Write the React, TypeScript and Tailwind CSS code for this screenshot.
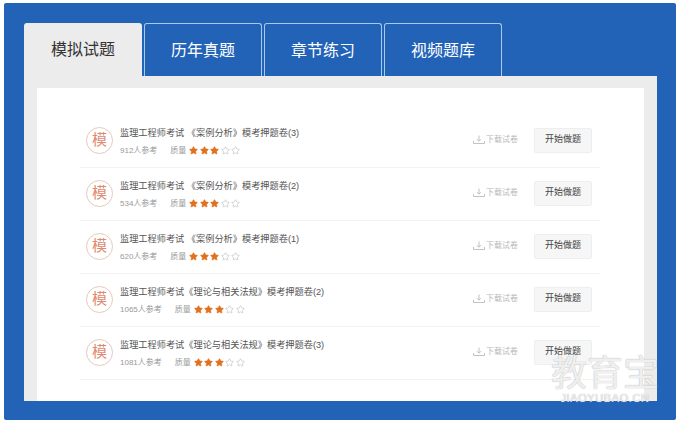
import { Star } from "lucide-react";

const tabs = ["模拟试题", "历年真题", "章节练习", "视频题库"];

const papers = [
  { title: "监理工程师考试 《案例分析》模考押题卷(3)", people: "912人参考" },
  { title: "监理工程师考试 《案例分析》模考押题卷(2)", people: "534人参考" },
  { title: "监理工程师考试 《案例分析》模考押题卷(1)", people: "620人参考" },
  { title: "监理工程师考试《理论与相关法规》模考押题卷(2)", people: "1065人参考" },
  { title: "监理工程师考试《理论与相关法规》模考押题卷(3)", people: "1081人参考" },
];

function Stars() {
  return (
    <div className="ml-[3px] flex gap-[1.5px]">
      {[0, 1, 2, 3, 4].map((i) =>
        i < 3 ? (
          <Star key={i} size={9} className="fill-[#e2711d] text-[#e2711d]" />
        ) : (
          <Star key={i} size={9} strokeWidth={1.5} className="text-[#b5b5b5]" />
        )
      )}
    </div>
  );
}

function DownloadIcon() {
  return (
    <svg width="12" height="10" viewBox="0 0 12 10" fill="none" stroke="#bbb" strokeWidth="0.9">
      <path d="M6 0.5V6M4 4.2L6 6.2L8 4.2" />
      <path d="M0.5 6V8.5H11.5V6" />
    </svg>
  );
}

function PaperRow({ title, people }: { title: string; people: string }) {
  return (
    <div className="flex h-[53px] items-center border-b border-[#f3f3f3] pl-[6px] pr-[8px]">
      <div className="mb-[2px] flex h-[27px] w-[27px] shrink-0 items-center justify-center rounded-full border-[1.5px] border-[#e6c8ba] text-[15px] text-[#e08a70]">
        模
      </div>
      <div className="ml-[7px] flex-1">
        <div className="text-[9.2px] leading-[13px] text-[#555]">{title}</div>
        <div className="mt-[5px] flex items-center text-[8px] leading-[11px] text-[#999]">
          <span>{people}</span>
          <span className="ml-[13px]">质量</span>
          <Stars />
        </div>
      </div>
      <div className="mb-[2px] flex items-center gap-[1px] text-[8px] text-[#b8b8b8]">
        <DownloadIcon />
        <span>下载试卷</span>
      </div>
      <button className="mb-[2px] ml-[16px] h-[25px] w-[58px] rounded-[2px] border border-[#eee] bg-[#f6f6f6] text-[9px] text-[#444]">
        开始做题
      </button>
    </div>
  );
}

export default function App() {
  return (
    <div className="relative h-[426px] w-[680px] overflow-hidden bg-white pl-[4px] pr-[4px] pt-[3px] font-['Liberation_Sans','Noto_Sans_CJK_SC',sans-serif]">
      <div className="flex h-[417px] flex-col rounded-[2px] bg-[#2263b8] pb-[19px] pl-[20px] pr-[19px] pt-[20px]">
        <div className="flex h-[53px] shrink-0 gap-[2px]">
          {tabs.map((tab, i) => (
            <div
              key={tab}
              className={
                i === 0
                  ? "flex w-[118px] items-center justify-center rounded-t-[3px] bg-[#ececec] pt-[1px] text-[16px] text-[#333]"
                  : "flex w-[118px] items-center justify-center rounded-t-[3px] border border-b-0 border-[#a9c8ea] pt-[1px] text-[16px] text-white"
              }
            >
              {tab}
            </div>
          ))}
        </div>
        <div className="flex-1 bg-[#ececec] px-[13px] pt-[12px]">
          <div className="h-full bg-white pl-[43px] pr-[44px] pt-[27px]">
            {papers.map((paper) => (
              <PaperRow key={paper.title} title={paper.title} people={paper.people} />
            ))}
          </div>
        </div>
      </div>
      {/* watermark */}
      <div className="absolute left-[549px] top-[355px] w-[112px] text-center text-white/85 [text-shadow:0_0_1px_#8f8f8f]">
        <div className="text-[36px] leading-[37px]">教育宝</div>
        <div className="text-[11px] leading-[13px] tracking-[0.6px]">JIAOYUBAO.CN</div>
      </div>
    </div>
  );
}
